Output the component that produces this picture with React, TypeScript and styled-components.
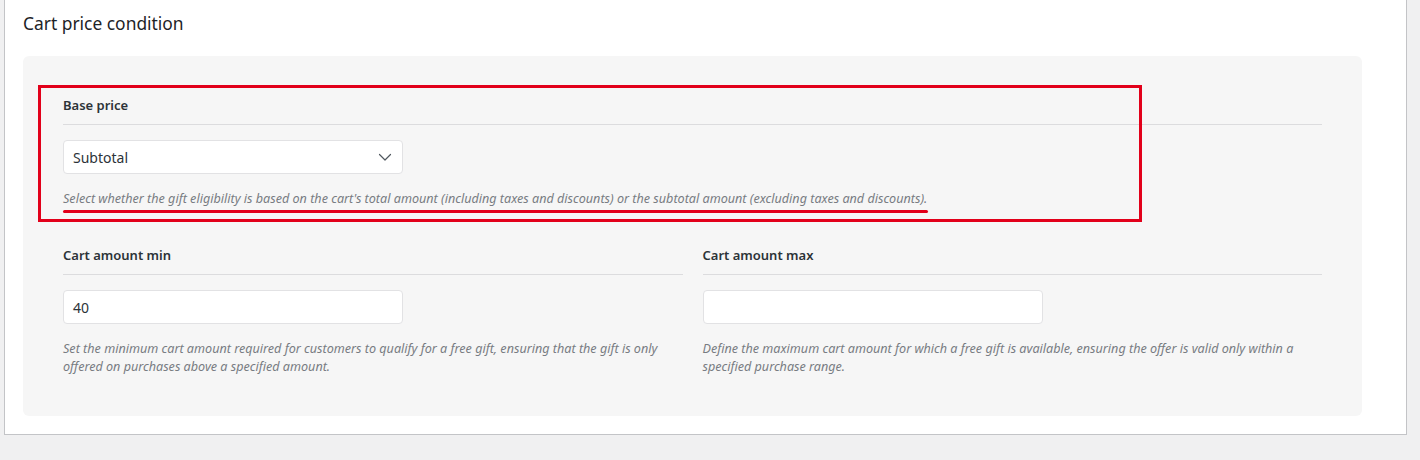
import React from "react";
import styled, { createGlobalStyle } from "styled-components";

const GlobalStyle = createGlobalStyle`
    body {
        margin: 0;
        background: #f0f0f1;
        font-family: "Noto Sans", "Open Sans", sans-serif;
        color: #1d2327;
    }
`

type Field = {
    label: string
    value: string
    help: string
}

const amountFields: Field[] = [
    {
        label: "Cart amount min",
        value: "40",
        help: "Set the minimum cart amount required for customers to qualify for a free gift, ensuring that the gift is only offered on purchases above a specified amount."
    },
    {
        label: "Cart amount max",
        value: "",
        help: "Define the maximum cart amount for which a free gift is available, ensuring the offer is valid only within a specified purchase range."
    }
]

const Chevron = () => (
    <svg width="14" height="14" viewBox="0 0 14 14" fill="none">
        <path d="M1.5 4.5 L7 10 L12.5 4.5" stroke="#50575e" strokeWidth="1.2" strokeLinecap="round" strokeLinejoin="round" />
    </svg>
)

const App = () => {
    return (
        <>
            <GlobalStyle />
            <Page>
                <Panel>
                    <Title>Cart price condition</Title>
                    <Card>
                        <FieldBlock>
                            <Label>Base price</Label>
                            <Select>
                                <span>Subtotal</span>
                                <Chevron />
                            </Select>
                            <Help>Select whether the gift eligibility is based on the cart's total amount (including taxes and discounts) or the subtotal amount (excluding taxes and discounts).</Help>
                            <Highlight />
                            <Underline />
                        </FieldBlock>
                        <Columns>
                            {amountFields.map((f) => (
                                <FieldBlock key={f.label}>
                                    <Label>{f.label}</Label>
                                    <Input>{f.value}</Input>
                                    <Help>{f.help}</Help>
                                </FieldBlock>
                            ))}
                        </Columns>
                    </Card>
                </Panel>
            </Page>
        </>
    )
}

export default App;

const Page = styled.div`
    width: 1420px;
    height: 460px;
    padding: 0 13px 0 4px;
    box-sizing: border-box;
`

const Panel = styled.div`
    background: #fff;
    border: 1px solid #c3c4c7;
    border-top: none;
    padding: 10px 44px 18px 18px;
    box-sizing: border-box;
    height: 435px;
`

const Title = styled.h2`
    margin: 0 0 20px;
    font-size: 17.4px;
    font-weight: 400;
    line-height: 26px;
    color: #1d2327;
`

const Card = styled.div`
    background: #f6f6f6;
    border-radius: 6px;
    padding: 39px 40px 40px;
    display: flex;
    flex-direction: column;
    gap: 37px;
`

const Columns = styled.div`
    display: grid;
    grid-template-columns: 1fr 1fr;
    column-gap: 20px;
`

const FieldBlock = styled.div`
    position: relative;
    display: flex;
    flex-direction: column;
`

const Label = styled.div`
    font-size: 13px;
    font-weight: 600;
    line-height: 20px;
    color: #2c3338;
    padding-bottom: 9px;
    border-bottom: 1px solid #dcdcde;
    margin-bottom: 15px;
`

const Select = styled.div`
    width: 340px;
    height: 34px;
    box-sizing: border-box;
    background: #fff;
    border: 1px solid #e2e2e4;
    border-radius: 4px;
    padding: 0 10px 0 9px;
    display: flex;
    align-items: center;
    justify-content: space-between;
    font-size: 14px;
    color: #2c3338;
`

const Input = styled.div`
    width: 340px;
    height: 34px;
    box-sizing: border-box;
    background: #fff;
    border: 1px solid #e2e2e4;
    border-radius: 4px;
    padding: 0 9px;
    display: flex;
    align-items: center;
    font-size: 14px;
    color: #2c3338;
`

const Help = styled.p`
    margin: 16px 0 0;
    font-size: 12.6px;
    font-style: italic;
    line-height: 18px;
    color: #787c82;
`

const Highlight = styled.div`
    position: absolute;
    left: -25px;
    top: -10px;
    width: 1104px;
    height: 137px;
    box-sizing: border-box;
    border: 3px solid #e2001a;
    pointer-events: none;
`

const Underline = styled.div`
    position: absolute;
    left: 0;
    top: 115px;
    width: 865px;
    height: 3px;
    border-radius: 2px;
    background: #e2001a;
    pointer-events: none;
`
